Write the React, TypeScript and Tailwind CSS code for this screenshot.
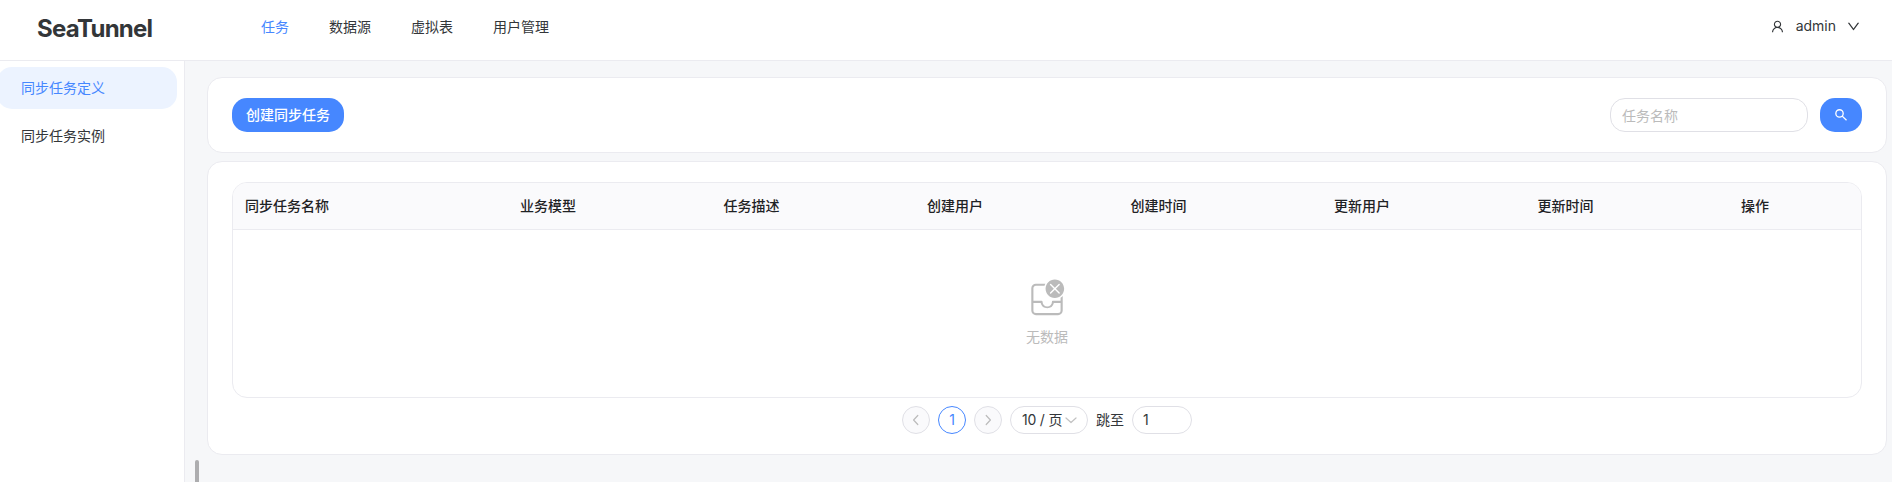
import type { ReactNode } from "react";

const navItems = ["任务", "数据源", "虚拟表", "用户管理"];
const columns = ["同步任务名称", "业务模型", "任务描述", "创建用户", "创建时间", "更新用户", "更新时间", "操作"];

function UserIcon() {
  return (
    <svg className="size-[15px]" viewBox="0 0 1024 1024" fill="currentColor">
      <path d="M858.5 763.6a374 374 0 0 0-80.6-119.5a375.63 375.63 0 0 0-119.5-80.6c-.4-.2-.8-.3-1.2-.5C719.5 518 760 444.7 760 362c0-137-111-248-248-248S264 225 264 362c0 82.7 40.5 156 102.8 201.1c-.4.2-.8.3-1.2.5c-44.8 18.9-85 46-119.5 80.6a375.63 375.63 0 0 0-80.6 119.5A371.7 371.7 0 0 0 136 901.8a8 8 0 0 0 8 8.2h60c4.4 0 7.9-3.5 8-7.8c2-77.2 33-149.5 87.8-204.3c56.7-56.7 132-87.9 212.2-87.9s155.5 31.2 212.2 87.9C779 752.7 810 825 812 902.2c.1 4.4 3.6 7.8 8 7.8h60a8 8 0 0 0 8-8.2c-1-47.8-10.900-94.300-29.500-138.200zM512 534c-45.900 0-89.100-17.900-121.600-50.400S340 407.900 340 362c0-45.900 17.900-89.100 50.400-121.600S466.100 190 512 190s89.100 17.900 121.600 50.400S684 316.100 684 362c0 45.900-17.900 89.100-50.400 121.600S557.900 534 512 534z" />
    </svg>
  );
}

function DownIcon() {
  return (
    <svg className="size-[15px]" viewBox="0 0 1024 1024" fill="currentColor">
      <path d="M884 256h-75c-5.100 0-9.900 2.500-12.900 6.600L512 654.200L227.900 262.600c-3-4.100-7.800-6.600-12.900-6.600h-75c-6.500 0-10.300 7.400-6.500 12.700l352.600 486.100c12.800 17.600 39 17.600 51.700 0l352.600-486.100c3.900-5.300.1-12.700-6.400-12.700z" />
    </svg>
  );
}

function SearchIcon() {
  return (
    <svg className="size-[14px]" viewBox="0 0 16 16" fill="none" stroke="currentColor" strokeWidth="1.5">
      <circle cx="6.3" cy="6.2" r="4.2" />
      <path d="M9.4 9.3 14.3 14" />
    </svg>
  );
}

function Chevron({ d, className }: { d: string; className: string }) {
  return (
    <svg className={className} viewBox="0 0 16 16" fill="none" stroke="currentColor" strokeWidth="1.2" strokeLinecap="round" strokeLinejoin="round">
      <path d={d} />
    </svg>
  );
}

function EmptyIcon() {
  return (
    <svg className="size-10" viewBox="0 0 28 28" fill="currentColor">
      <path d="M26 7.500C26 11.090 23.090 14 19.500 14S13 11.090 13 7.500 15.910 1 19.500 1 26 3.910 26 7.500zm-9.146-3.354a.5.5 0 0 0-.708.708L18.793 7.500l-2.647 2.646a.5.5 0 0 0 .708.708L19.500 8.207l2.646 2.647a.5.5 0 0 0 .708-.708L20.207 7.500l2.647-2.646a.5.5 0 0 0-.708-.708L19.500 6.793l-2.646-2.647z" />
      <path d="M25 22.750V12.599a7.530 7.530 0 0 1-1.500 1.288V16h-5.318l-.12.007a.75.75 0 0 0-.63.743 3.250 3.250 0 0 1-6.500 0l-.007-.102a.75.75 0 0 0-.743-.648H4.500V7.250c0-.966.784-1.750 1.750-1.750h6.020c.138-.526.331-1.029.577-1.500H6.250A3.250 3.250 0 0 0 3 7.250v15.500A3.250 3.250 0 0 0 6.250 26h15.500A3.250 3.250 0 0 0 25 22.750zM4.500 17.500h5.066a4.750 4.750 0 0 0 9.230 0H23.500v5.250a1.750 1.750 0 0 1-1.750 1.750H6.250a1.750 1.750 0 0 1-1.750-1.750V17.500z" />
    </svg>
  );
}

function Card({ children, className }: { children: ReactNode; className: string }) {
  return <section className={`rounded-[15px] border border-[#ebebf0] bg-white px-6 ${className}`}>{children}</section>;
}

export default function App() {
  return (
    <div className="flex h-[482px] flex-col overflow-hidden bg-white font-[Inter,'Noto_Sans_CJK_SC',sans-serif] text-sm text-[#333639]">
      <header className="flex h-[61px] shrink-0 items-center border-b border-[#ebebf0] pr-[31px] pl-[37px]">
        <h1 className="w-[224px] pb-0.5 text-2xl font-bold tracking-[-0.8px] text-[#333639]">SeaTunnel</h1>
        <nav className="flex gap-10 pb-[7px]">
          {navItems.map((item, i) => (
            <a key={item} className={i === 0 ? "text-[#4687ff]" : ""}>{item}</a>
          ))}
        </nav>
        <div className="ml-auto flex items-center pb-2">
          <UserIcon />
          <span className="mr-2.5 ml-[11px]">admin</span>
          <DownIcon />
        </div>
      </header>
      <div className="flex min-h-0 flex-1">
        <aside className="w-[185px] shrink-0 border-r border-[#ebebf0] pt-1.5">
          <div className="mr-[7px] -ml-[3px] flex h-[42px] items-center rounded-[15px] bg-[#ecf3ff] pl-6 text-[#4687ff]">同步任务定义</div>
          <div className="mt-1.5 flex h-[42px] items-center pl-[21px]">同步任务实例</div>
        </aside>
        <main className="relative flex min-w-0 flex-1 flex-col gap-2 bg-[#f6f7f9] pt-4 pr-[5px] pl-[22px]">
          <Card className="flex h-[76px] shrink-0 items-center">
            <button className="h-[34px] w-28 rounded-[15px] bg-[#4687ff] font-medium text-white">创建同步任务</button>
            <input
              placeholder="任务名称"
              className="ml-auto h-[34px] w-[198px] rounded-[15px] border border-[#e0e0e6] px-[11px] placeholder:text-[#bbbbbb]"
            />
            <button className="ml-3 flex h-[34px] w-[42px] items-center justify-center rounded-[15px] bg-[#4687ff] text-white">
              <SearchIcon />
            </button>
          </Card>
          <Card className="flex h-[294px] shrink-0 flex-col pt-5">
            <div className="h-[216px] overflow-hidden rounded-[15px] border border-[#ebebf0]">
              <div className="grid h-[47px] grid-cols-[275px_repeat(6,203.5px)_1fr] items-center border-b border-[#ebebf0] bg-[#fafafc] font-medium text-[#1f2225]">
                {columns.map((c) => (
                  <div key={c} className="pl-3">{c}</div>
                ))}
              </div>
              <div className="flex h-[167px] flex-col items-center justify-center gap-[9px] pb-[3px] text-[#bbbbbb]">
                <EmptyIcon />
                <span>无数据</span>
              </div>
            </div>
            <div className="mt-2 flex items-center justify-center gap-2">
              <button className="flex size-7 items-center justify-center rounded-full border border-[#e0e0e6] bg-[#fafafc] text-[#bbbbbb]">
                <Chevron className="size-4" d="M9.8 3.5 5.6 8l4.2 4.5" />
              </button>
              <button className="size-7 rounded-full border border-[#4687ff] text-[#4687ff]">1</button>
              <button className="flex size-7 items-center justify-center rounded-full border border-[#e0e0e6] bg-[#fafafc] text-[#bbbbbb]">
                <Chevron className="size-4" d="M6.2 3.5 10.4 8l-4.2 4.5" />
              </button>
              <div className="flex h-7 w-[78px] items-center justify-between rounded-[14px] border border-[#e0e0e6] pr-2 pl-[11px] whitespace-nowrap">
                <span className="tracking-[-0.2px]">10 / 页</span>
                <Chevron className="size-4 text-[#c2c2c2]" d="M3 6l5 4.5L13 6" />
              </div>
              <span>跳至</span>
              <div className="flex h-7 w-[60px] items-center rounded-[14px] border border-[#e0e0e6] pl-2.5">1</div>
            </div>
          </Card>
          <div className="absolute bottom-0 left-[10px] h-[22px] w-1 rounded-t-sm bg-[#adadaf]" />
        </main>
      </div>
    </div>
  );
}
